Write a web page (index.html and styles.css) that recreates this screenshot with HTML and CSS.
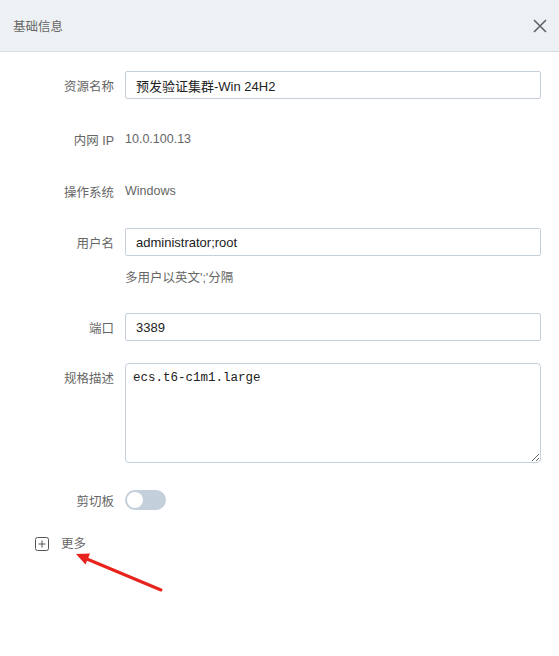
FILE: index.html
```html
<!DOCTYPE html>
<html lang="zh">
<head>
<meta charset="utf-8">
<link rel="stylesheet" href="styles.css">
</head>
<body>
<div class="dialog">
  <div class="header">
    <span class="title">基础信息</span>
    <svg class="close" width="14" height="14" viewBox="0 0 14 14"><path d="M1 1L13 13M13 1L1 13" stroke="#5f6368" stroke-width="1.6" fill="none"/></svg>
  </div>
  <div class="form">
    <div class="row r1">
      <label class="label">资源名称</label>
      <input class="input" type="text" value="预发验证集群-Win 24H2">
    </div>
    <div class="row r2">
      <label class="label">内网 IP</label>
      <span class="value">10.0.100.13</span>
    </div>
    <div class="row r3">
      <label class="label">操作系统</label>
      <span class="value">Windows</span>
    </div>
    <div class="row r4">
      <label class="label">用户名</label>
      <input class="input" type="text" value="administrator;root">
    </div>
    <div class="help">多用户以英文';'分隔</div>
    <div class="row r5">
      <label class="label">端口</label>
      <input class="input" type="text" value="3389">
    </div>
    <div class="row top r6">
      <label class="label">规格描述</label>
      <textarea class="textarea">ecs.t6-c1m1.large</textarea>
    </div>
    <div class="row r7">
      <label class="label">剪切板</label>
      <span class="switch"><span class="knob"></span></span>
    </div>
    <div class="more">
      <svg width="14" height="14" viewBox="0 0 14 14"><rect x="0.5" y="0.5" width="13" height="13" rx="2" fill="none" stroke="#555" stroke-width="1"/><path d="M3.5 7H10.5M7 3.5V10.5" stroke="#555" stroke-width="1" fill="none"/></svg>
      <span>更多</span>
    </div>
  </div>
  <svg class="arrow" width="559" height="656" viewBox="0 0 559 656"><line x1="161" y1="590" x2="87" y2="559" stroke="#e8221c" stroke-width="3" stroke-linecap="round"/><polygon points="76,554 90,553.5 85.5,564.5" fill="#e8221c"/></svg>
</div>
</body>
</html>
```
FILE: styles.css
```css
html, body {
  margin: 0;
  padding: 0;
  background: #fff;
}
body {
  font-family: "Liberation Sans", "Noto Sans CJK SC", sans-serif;
  color: #333;
}
.dialog {
  position: relative;
  width: 559px;
  height: 656px;
}
.header {
  height: 52px;
  background: #eef1f3;
  border-bottom: 1px solid #d9dcdf;
  display: flex;
  align-items: center;
  justify-content: space-between;
  padding: 0 12px 0 13px;
  box-sizing: border-box;
}
.title {
  font-size: 12.5px;
  color: #666;
}
.close {
  display: block;
}
.form {
  padding: 19px 18px 0 0;
}
.row {
  display: flex;
  align-items: center;
  min-height: 28px;
}
.row.top {
  align-items: flex-start;
}
.label {
  flex: none;
  text-align: right;
  font-size: 12.5px;
  color: #666;
  padding-right: 11px;
  box-sizing: border-box;
  width: 125px;
}
.row.top .label {
  padding-top: 8px;
  line-height: 16px;
}
.value {
  font-size: 12.5px;
  color: #666;
}
.input {
  flex: 1;
  height: 28px;
  box-sizing: border-box;
  border: 1px solid #c5d0dc;
  border-radius: 2px;
  padding: 0 10px;
  font-family: "Liberation Sans", "Noto Sans CJK SC", sans-serif;
  font-size: 13px;
  color: #222;
  outline: none;
  margin: 0;
}
.textarea {
  flex: 1;
  height: 100px;
  box-sizing: border-box;
  border: 1px solid #c5d0dc;
  border-radius: 4px;
  padding: 7px 7px;
  font-family: "Liberation Mono", monospace;
  font-size: 12.5px;
  color: #222;
  resize: vertical;
  outline: none;
  margin: 0;
}
.r2 { margin-top: 26px; }
.r3 { margin-top: 24px; }
.r4 { margin-top: 23px; }
.help {
  margin-left: 125px;
  font-size: 12.5px;
  color: #666;
  line-height: 24px;
  margin-top: 10px;
}
.r5 { margin-top: 23px; }
.r6 { margin-top: 22px; }
.r7 { margin-top: 23px; }
.switch {
  width: 41px;
  height: 20px;
  border-radius: 10px;
  background: #c3cfdb;
  display: flex;
  align-items: center;
  padding: 0 2px;
  box-sizing: border-box;
}
.knob {
  width: 16px;
  height: 16px;
  border-radius: 50%;
  background: #fff;
}
.more {
  display: flex;
  align-items: center;
  gap: 12px;
  margin-top: 20px;
  padding-left: 35px;
  font-size: 12.5px;
  color: #666;
  line-height: 20px;
}
.more svg {
  display: block;
}
.arrow {
  position: absolute;
  left: 0;
  top: 0;
  pointer-events: none;
}
```
